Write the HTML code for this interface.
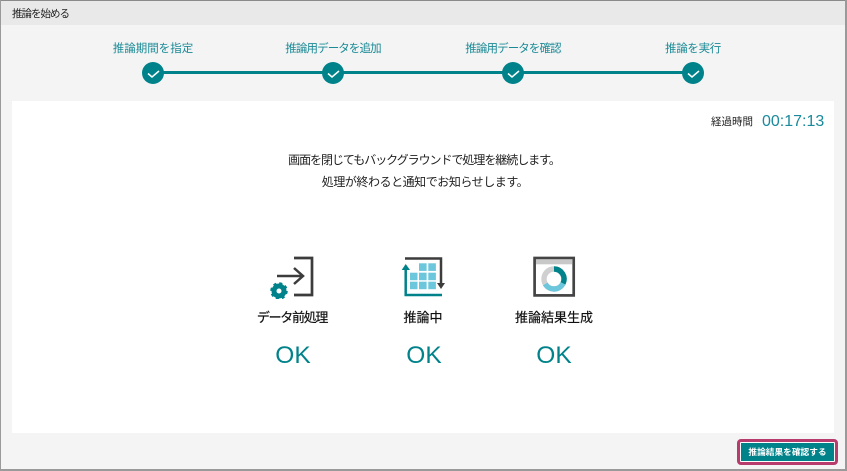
<!DOCTYPE html>
<html lang="ja"><head><meta charset="utf-8">
<style>
html,body{margin:0;padding:0}
body{width:847px;height:471px;overflow:hidden;position:relative;background:#f4f4f4;font-family:"Liberation Sans","Noto Sans CJK JP",sans-serif}
.a{position:absolute;white-space:nowrap}
.c{text-align:center;transform:translateX(-50%)}
.step{top:41px;font-size:11.500px;line-height:16px;color:#1a8a96}
.dot{position:absolute;top:62px;width:22px;height:22px;border-radius:50%;background:#00828a}
.lbl{top:309px;font-size:13px;line-height:18px;color:#111;-webkit-text-stroke:.2px #111}
.ok{top:342px;font-size:24.500px;line-height:28px;color:#00828a}
.msg{font-size:12px;line-height:22px;color:#222}
</style></head><body>
<div class="a" style="left:0;top:0;width:847px;height:25px;background:#e9e9e9"></div>
<div class="a" style="left:0;top:0;width:847px;height:1px;background:#8a8a8a"></div>
<div class="a" style="left:0;top:0;width:1px;height:471px;background:#9a9a9a"></div>
<div class="a" style="left:845px;top:0;width:2px;height:471px;background:#9a9a9a"></div>
<div class="a" style="left:0;top:469px;width:847px;height:2px;background:#9a9a9a"></div>
<div class="a" style="left:12px;top:6px;font-size:10.500px;line-height:16px;color:#222;letter-spacing:-1px">推論を始める</div>

<div class="a step c" style="left:153px">推論期間を指定</div>
<div class="a step c" style="left:333px;letter-spacing:-.9px">推論用データを追加</div>
<div class="a step c" style="left:513px;letter-spacing:-.9px">推論用データを確認</div>
<div class="a step c" style="left:693px;letter-spacing:-.3px">推論を実行</div>
<div class="a" style="left:153px;top:71px;width:540px;height:3px;background:#00828a"></div>
<div class="dot" style="left:142px"></div><div class="dot" style="left:322px"></div><div class="dot" style="left:502px"></div><div class="dot" style="left:682px"></div>
<svg class="a" style="left:0;top:0" width="847" height="100" fill="none" stroke="#fff" stroke-width="1.500">
<path d="M148 73.500l4 3.500 7-6"/><path d="M328 73.500l4 3.500 7-6"/><path d="M508 73.500l4 3.500 7-6"/><path d="M688 73.500l4 3.500 7-6"/>
</svg>

<div class="a" style="left:12px;top:101px;width:822px;height:332px;background:#fff"></div>
<div class="a" style="left:711px;top:114px;font-size:10.500px;line-height:16px;color:#222">経過時間</div>
<div class="a" style="left:762px;top:113px;font-size:16px;line-height:18px;color:#1a8a9c">00:17:13</div>
<div class="a msg c" style="left:424px;top:149px;letter-spacing:-1.040px">画面を閉じてもバックグラウンドで処理を継続します。</div>
<div class="a msg c" style="left:425px;top:171px;letter-spacing:-.45px">処理が終わると通知でお知らせします。</div>

<svg class="a" style="left:268px;top:255px" width="48" height="44" fill="none">
<path d="M26 3H44V40H26" stroke="#3c3c3c" stroke-width="2.700"/>
<path d="M9 21H35M26 13l9 8-9 8" stroke="#3c3c3c" stroke-width="2.500"/>
<circle cx="11" cy="36" r="5" stroke="#00828a" stroke-width="5"/>
<circle cx="11" cy="36" r="7.500" stroke="#00828a" stroke-width="2.500" stroke-dasharray="3 2.890"/>
</svg>
<div class="a lbl c" style="left:292px;letter-spacing:-1.300px">データ前処理</div>
<div class="a ok c" style="left:293px">OK</div>

<svg class="a" style="left:400px;top:255px" width="48" height="44" fill="none">
<path d="M5 3.500H41V28" stroke="#3c3c3c" stroke-width="2.500"/>
<path d="M37 28H45L41 34z" fill="#3c3c3c"/>
<path d="M5.700 13V40H42" stroke="#00828a" stroke-width="2.500"/>
<path d="M1.700 15H10L5.700 9z" fill="#00828a"/>
<g fill="#6cc6dc">
<rect x="19" y="8.300" width="7.600" height="7.600"/><rect x="28.300" y="8.300" width="7.600" height="7.600"/>
<rect x="10" y="17.700" width="7.500" height="7.500"/><rect x="19" y="17.700" width="7.600" height="7.500"/><rect x="28.300" y="17.700" width="7.600" height="7.500"/>
<rect x="10" y="26.700" width="7.500" height="7.500"/><rect x="19" y="26.700" width="7.600" height="7.500"/><rect x="28.300" y="26.700" width="7.600" height="7.500"/>
</g>
</svg>
<div class="a lbl c" style="left:423px">推論中</div>
<div class="a ok c" style="left:424px">OK</div>

<svg class="a" style="left:531px;top:255px" width="46" height="44" fill="none">
<rect x="3.600" y="3" width="39.100" height="37.400" fill="#fff" stroke="#444" stroke-width="2.700"/>
<rect x="5" y="4.300" width="36.400" height="5" fill="#c8c8c8"/>
<circle cx="23" cy="24" r="10" stroke="#d0d0d0" stroke-width="5.400"/>
<path d="M23 14A10 10 0 0 1 32 28.400" stroke="#00828a" stroke-width="5.400"/>
<path d="M32 28.400A10 10 0 0 1 14.300 28.900" stroke="#6cc6dc" stroke-width="5.400"/>
</svg>
<div class="a lbl c" style="left:554px">推論結果生成</div>
<div class="a ok c" style="left:554px">OK</div>

<div class="a" style="left:737px;top:439px;width:101px;height:26px;box-sizing:border-box;border:3px solid #b83b6e;border-radius:4px;background:#fff"></div>
<div class="a" style="left:741px;top:443px;width:93px;height:18px;background:#00828a;color:#fff;font-size:8.700px;line-height:18px;text-align:center;font-weight:700">推論結果を確認する</div>
</body></html>
